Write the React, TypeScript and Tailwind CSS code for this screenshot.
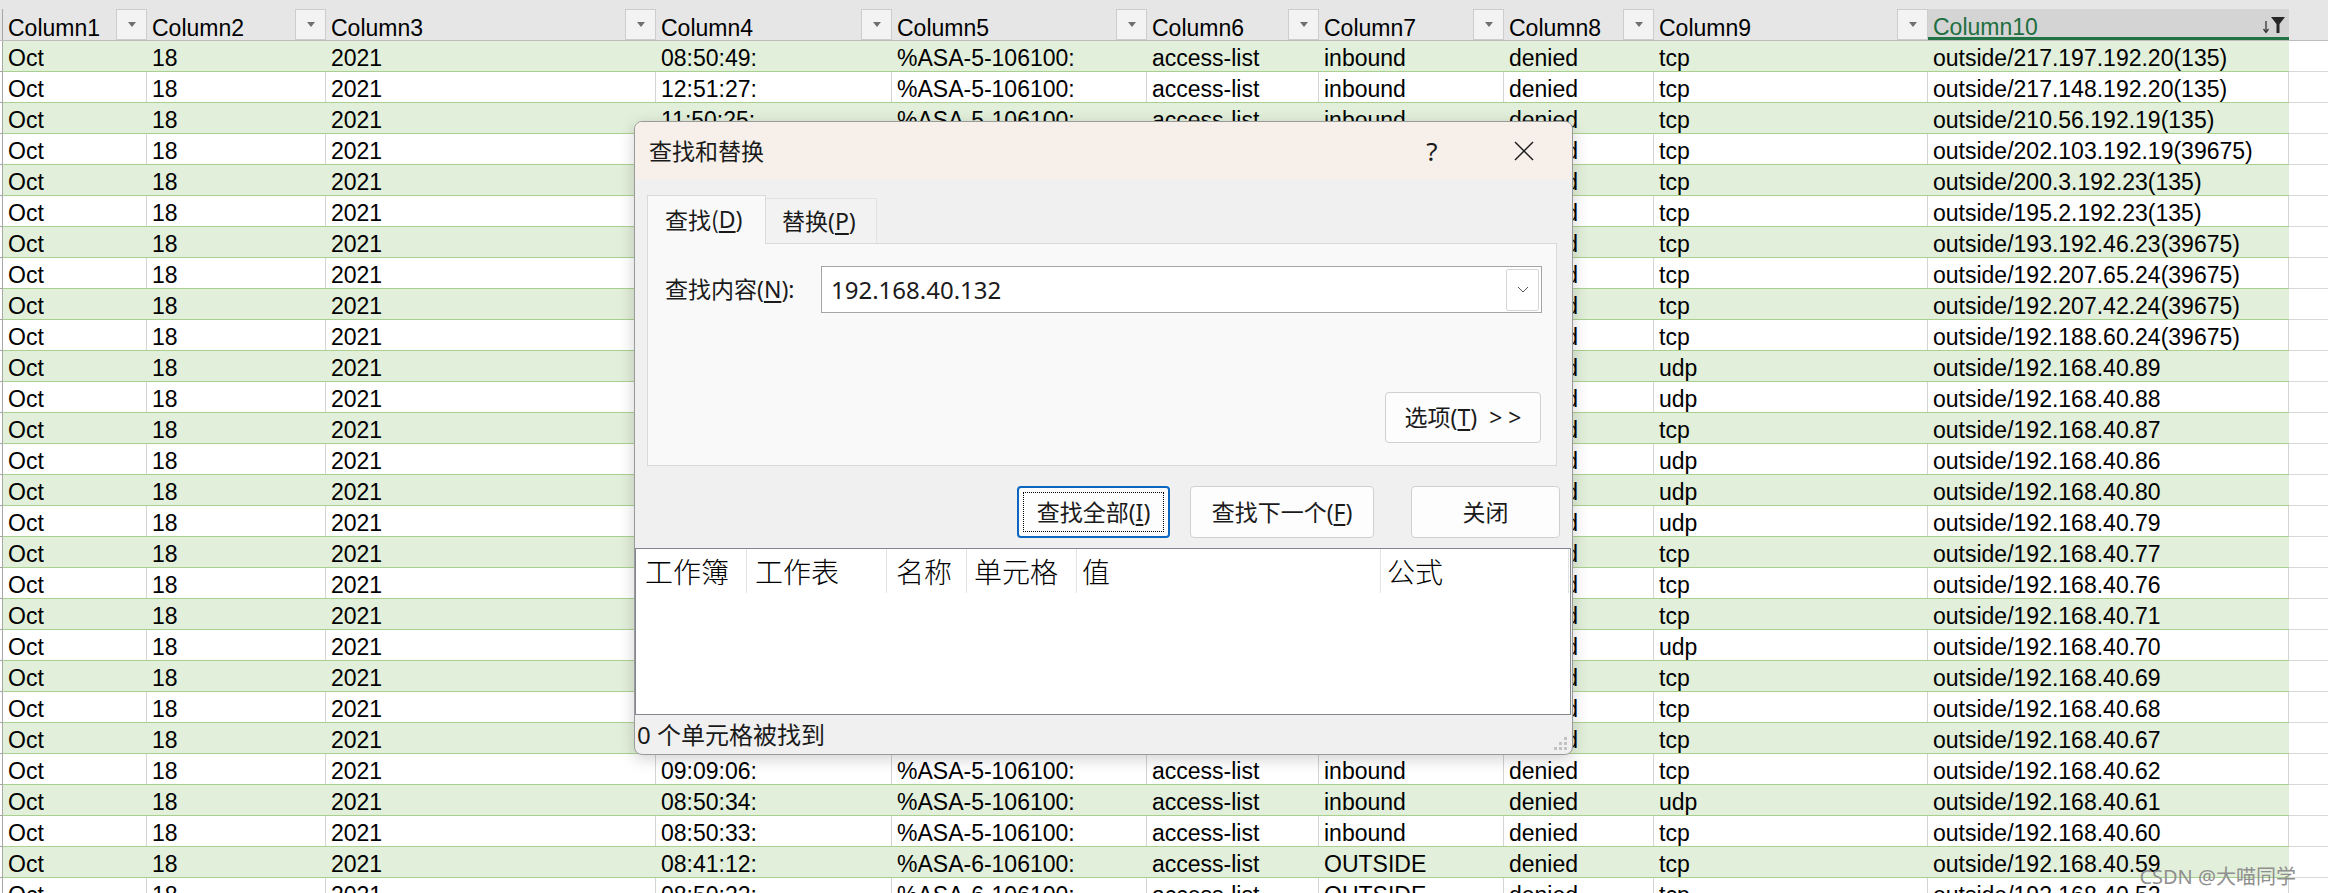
import React from 'react';

const COLS = [
  { name: 'Column1', w: 'w-[144px]' },
  { name: 'Column2', w: 'w-[179px]' },
  { name: 'Column3', w: 'w-[330px]' },
  { name: 'Column4', w: 'w-[236px]' },
  { name: 'Column5', w: 'w-[255px]' },
  { name: 'Column6', w: 'w-[172px]' },
  { name: 'Column7', w: 'w-[185px]' },
  { name: 'Column8', w: 'w-[150px]' },
  { name: 'Column9', w: 'w-[274px]' },
  { name: 'Column10', w: 'w-[361px]' },
];

const TIMES: Record<number, string> = {
  0: '08:50:49:',
  1: '12:51:27:',
  2: '11:50:25:',
  23: '09:09:06:',
  24: '08:50:34:',
  25: '08:50:33:',
  26: '08:41:12:',
  27: '08:50:22:',
};

const PROTO_DST: [string, string][] = [
  ['tcp', 'outside/217.197.192.20(135)'],
  ['tcp', 'outside/217.148.192.20(135)'],
  ['tcp', 'outside/210.56.192.19(135)'],
  ['tcp', 'outside/202.103.192.19(39675)'],
  ['tcp', 'outside/200.3.192.23(135)'],
  ['tcp', 'outside/195.2.192.23(135)'],
  ['tcp', 'outside/193.192.46.23(39675)'],
  ['tcp', 'outside/192.207.65.24(39675)'],
  ['tcp', 'outside/192.207.42.24(39675)'],
  ['tcp', 'outside/192.188.60.24(39675)'],
  ['udp', 'outside/192.168.40.89'],
  ['udp', 'outside/192.168.40.88'],
  ['tcp', 'outside/192.168.40.87'],
  ['udp', 'outside/192.168.40.86'],
  ['udp', 'outside/192.168.40.80'],
  ['udp', 'outside/192.168.40.79'],
  ['tcp', 'outside/192.168.40.77'],
  ['tcp', 'outside/192.168.40.76'],
  ['tcp', 'outside/192.168.40.71'],
  ['udp', 'outside/192.168.40.70'],
  ['tcp', 'outside/192.168.40.69'],
  ['tcp', 'outside/192.168.40.68'],
  ['tcp', 'outside/192.168.40.67'],
  ['tcp', 'outside/192.168.40.62'],
  ['udp', 'outside/192.168.40.61'],
  ['tcp', 'outside/192.168.40.60'],
  ['tcp', 'outside/192.168.40.59'],
  ['tcp', 'outside/192.168.40.52'],
];

// rows 4..23 sit behind the dialog for columns 4-7, so those cells stay empty
const rows = PROTO_DST.map(([proto, dst], i) => {
  const late = i >= 26;
  const hidden = i >= 3 && i <= 22;
  return [
    'Oct',
    '18',
    '2021',
    hidden ? '' : TIMES[i],
    hidden ? '' : late ? '%ASA-6-106100:' : '%ASA-5-106100:',
    hidden ? '' : 'access-list',
    hidden ? '' : late ? 'OUTSIDE' : 'inbound',
    'denied',
    proto,
    dst,
  ];
});

const DropArrow = () => (
  <div className="flex h-[31px] w-[31px] shrink-0 items-center justify-center border border-[#cdcdcd] bg-[#f3f3f3]">
    <svg width="8" height="5" viewBox="0 0 8 5">
      <polygon points="0,0 8,0 4,5" fill="#6f6f6f" />
    </svg>
  </div>
);

const FilterBtn = () => (
  <div className="flex h-[31px] w-[31px] shrink-0 items-center justify-center">
    <svg width="24" height="18" viewBox="0 0 24 18">
      <line x1="4" y1="5" x2="4" y2="16" stroke="#333" strokeWidth="1.3" />
      <polyline points="1.5,13 4,16.5 6.5,13" fill="none" stroke="#333" strokeWidth="1.3" />
      <polygon points="9,1 23,1 17.5,8 17.5,17 14.5,17 14.5,8" fill="#262626" />
    </svg>
  </div>
);

const Under = ({ c }: { c: string }) => <span className="underline underline-offset-[3px]">{c}</span>;

function Sheet() {
  return (
    <div className="font-['Liberation_Sans',sans-serif] text-[23px] text-black">
      <div className="h-[9px] bg-[#e6e6e6]" />
      <div className="flex h-[32px] border-b border-[#bdbdbd] bg-[#e6e6e6]">
        <div className="w-[3px] shrink-0 border-r border-[#a6a6a6]" />
        {COLS.map((c, i) =>
          i === 9 ? (
            <div key={c.name} className={`${c.w} flex shrink-0 justify-between border-b-[3px] border-[#217346] bg-[#d4d4d4]`}>
              <span className="pl-[5px] pt-[5px] leading-[26px] text-[#1e6e40]">{c.name}</span>
              <FilterBtn />
            </div>
          ) : (
            <div key={c.name} className={`${c.w} flex shrink-0 justify-between`}>
              <span className="pl-[5px] pt-[6px] leading-[26px]">{c.name}</span>
              <DropArrow />
            </div>
          )
        )}
        <div className="flex-1" />
      </div>
      {rows.map((r, ri) => {
        const green = ri % 2 === 0;
        return (
          <div key={ri} className="flex h-[31px]">
            <div className="w-[3px] shrink-0 border-r border-b border-[#a6a6a6] bg-white" />
            <div className={`flex shrink-0 border-b border-[#a9d08e] ${green ? 'bg-[#e2efda]' : 'bg-white'}`}>
              {r.map((v, ci) => (
                <div
                  key={ci}
                  className={`${COLS[ci].w} shrink-0 overflow-hidden whitespace-nowrap pl-[5px] pt-[4px] leading-[26px] ${green ? '' : 'border-r border-[#d4d4d4]'}`}
                >
                  {v}
                </div>
              ))}
            </div>
            <div className="flex-1 border-b border-[#d9d9d9] bg-white" />
          </div>
        );
      })}
    </div>
  );
}

function Dialog() {
  return (
    <div className="absolute left-[634px] top-[121px] flex h-[634px] w-[939px] flex-col overflow-hidden rounded-[8px] border border-[#9a9a9a] bg-[#f0f0f0] font-['Noto_Sans','Noto_Sans_CJK_SC',sans-serif] text-[23px] text-[#1a1a1a] shadow-[0_4px_16px_rgba(0,0,0,0.18)]">
      <div className="flex h-[57px] shrink-0 items-center bg-[#f7efe9] pl-[14px]">
        <span className="font-['Noto_Sans_CJK_SC',sans-serif]">查找和替换</span>
        <div className="ml-auto mr-[38px] flex items-center gap-[67px]">
          <span className="w-[30px] text-center text-[26px] leading-none">?</span>
          <svg width="20" height="20" viewBox="0 0 20 20">
            <line x1="1" y1="1" x2="19" y2="19" stroke="#1a1a1a" strokeWidth="1.4" />
            <line x1="19" y1="1" x2="1" y2="19" stroke="#1a1a1a" strokeWidth="1.4" />
          </svg>
        </div>
      </div>

      <div className="flex flex-col px-[12px] pt-[16px]">
        <div className="flex h-[48px] items-end">
          <div className="relative z-10 -mb-px flex h-[49px] w-[119px] items-center border border-b-0 border-[#dadada] bg-[#f9f9f9] pl-[17px] pb-[2px]">
            <span className="font-['Noto_Sans_CJK_SC',sans-serif]">查找(</span>
            <Under c="D" />)
          </div>
          <div className="flex h-[45px] w-[111px] items-center border border-b-0 border-l-0 border-[#e2e2e2] bg-[#f2f2f2] pl-[16px]">
            替换(<Under c="P" />)
          </div>
        </div>
        <div className="flex h-[223px] w-[910px] flex-col border border-[#dadada] bg-[#f9f9f9]">
          <div className="mt-[22px] flex items-center pl-[17px] pr-[14px]">
            <span>
              查找内容(<Under c="N" />):
            </span>
            <div className="ml-auto flex h-[47px] w-[721px] items-center border border-[#a5a5a5] bg-white pl-[9px] pr-[2px]">
              <span className="flex-1 text-[24px]">192.168.40.132</span>
              <div className="flex h-[42px] w-[33px] items-center justify-center rounded-[2px] border border-[#d6d6d6] bg-white">
                <svg width="12" height="7" viewBox="0 0 12 7">
                  <polyline points="1,1 6,6 11,1" fill="none" stroke="#555" strokeWidth="1" />
                </svg>
              </div>
            </div>
          </div>
          <div className="mr-[15px] mt-[79px] flex h-[51px] w-[156px] items-center justify-center self-end whitespace-pre rounded-[4px] border border-[#d0d0d0] bg-[#fdfdfd]">
            选项(<Under c="T" />){'  > >'}
          </div>
        </div>
        <div className="mt-[20px] flex h-[52px] justify-end">
          <div className="flex w-[153px] items-center justify-center rounded-[4px] border-2 border-[#0a67c0] bg-[#fdfdfd] p-[4px]">
            <div className="flex h-full w-full items-center justify-center border border-dotted border-black">
              查找全部(<Under c="I" />)
            </div>
          </div>
          <div className="ml-[20px] flex w-[184px] items-center justify-center rounded-[4px] border border-[#d0d0d0] bg-[#fdfdfd]">
            查找下一个(<Under c="F" />)
          </div>
          <div className="ml-[37px] flex w-[149px] items-center justify-center rounded-[4px] border border-[#d0d0d0] bg-[#fdfdfd]">
            关闭
          </div>
        </div>
      </div>

      <div className="mt-[10px] h-[167px] w-[936px] shrink-0 border border-[#838790] bg-white font-['Noto_Sans_CJK_SC',sans-serif] text-[28px] font-light text-black">
        <div className="flex h-[44px] items-center">
          <div className="flex h-full w-[111px] items-center border-r border-[#e3e3e3] pl-[9px]">工作簿</div>
          <div className="flex h-full w-[140px] items-center border-r border-[#e3e3e3] pl-[8px]">工作表</div>
          <div className="flex h-full w-[80px] items-center border-r border-[#e3e3e3] pl-[9px]">名称</div>
          <div className="flex h-full w-[110px] items-center border-r border-[#e3e3e3] pl-[7px]">单元格</div>
          <div className="flex h-full w-[304px] items-center border-r border-[#e3e3e3] pl-[5px]">值</div>
          <div className="flex h-full w-[188px] items-center border-r border-[#e3e3e3] pl-[6px]">公式</div>
        </div>
      </div>

      <div className="relative flex flex-1 items-center pl-[2px] text-[24px]">
        0 个单元格被找到
        <svg className="absolute bottom-[3px] right-[4px]" width="16" height="16" viewBox="0 0 16 16">
          <rect x="12" y="2" width="3" height="3" fill="#c2c2c2" />
          <rect x="7" y="7" width="3" height="3" fill="#c2c2c2" />
          <rect x="12" y="7" width="3" height="3" fill="#c2c2c2" />
          <rect x="2" y="12" width="3" height="3" fill="#c2c2c2" />
          <rect x="7" y="12" width="3" height="3" fill="#c2c2c2" />
          <rect x="12" y="12" width="3" height="3" fill="#c2c2c2" />
        </svg>
      </div>
    </div>
  );
}

export default function App() {
  return (
    <div className="relative h-[893px] w-[2328px] overflow-hidden bg-white">
      <Sheet />
      <Dialog />
      <div className="absolute bottom-[6px] right-[32px] font-['Noto_Sans','Noto_Sans_CJK_SC',sans-serif] text-[20px] leading-none text-[#8f8f8f]">
        CSDN @大喵同学
      </div>
    </div>
  );
}
